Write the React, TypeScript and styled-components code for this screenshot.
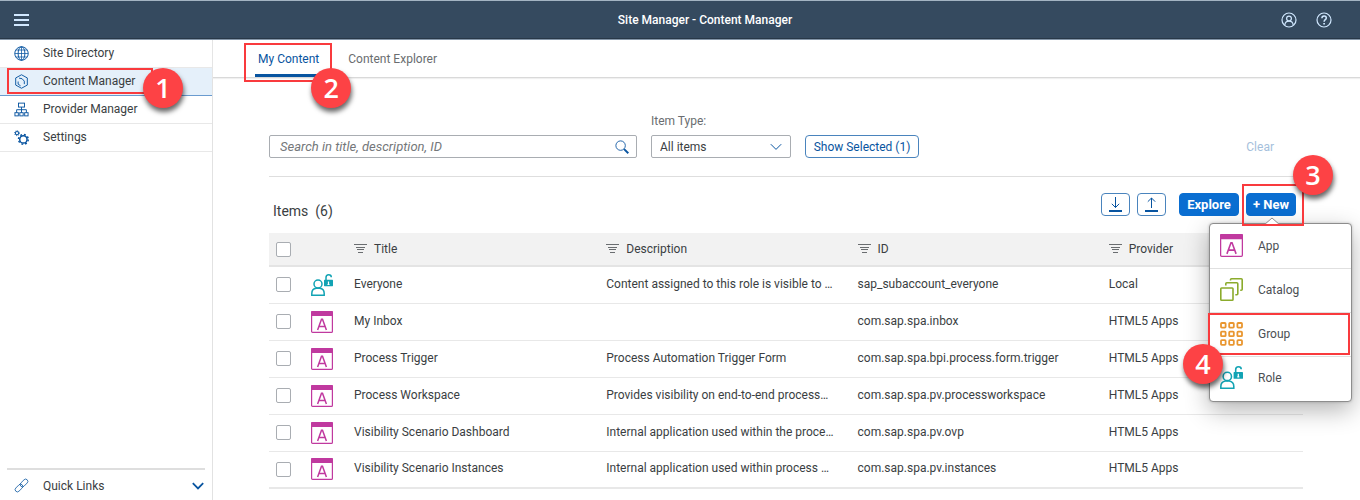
import React from "react";
import styled, { createGlobalStyle, css } from "styled-components";

const Global = createGlobalStyle`
  * { box-sizing: border-box; }
  body {
    margin: 0;
    background: #fff;
    color: #3a3e42;
    font: 12px/18px Roboto, "Liberation Sans", sans-serif;
  }
  button, input, select { font: inherit; color: inherit; }
  svg { display: block; flex: none; }
`;

const Page = styled.div`
  display: flex;
  flex-direction: column;
  min-height: 100vh;
`;

/* ---------- shell bar ---------- */

const ShellBar = styled.header`
  display: grid;
  grid-template-columns: 50px 1fr auto;
  align-items: center;
  height: 40px;
  background: #354a5f;
  border-top: 1px solid #a3b4c2;
  border-bottom: 1px solid #8496a8;
  box-shadow: inset 0 -1px 0 #283848;
  color: #fff;
`;

const ShellTitle = styled.h1`
  grid-column: 2 / 4;
  grid-row: 1;
  margin: 0;
  text-align: center;
  font-size: 12px;
  font-weight: 500;
`;

const ShellActions = styled.div`
  grid-column: 3;
  grid-row: 1;
  display: flex;
  gap: 19px;
  padding-right: 28px;
`;

const IconButton = styled.button`
  display: flex;
  padding: 0;
  border: 0;
  background: none;
  color: #d1e8ff;
`;

const MenuButton = styled(IconButton)`
  padding-left: 14px;
`;

/* ---------- side navigation ---------- */

const Body = styled.div`
  display: flex;
  flex: 1;
`;

const Sidebar = styled.nav`
  display: flex;
  flex-direction: column;
  justify-content: space-between;
  flex: none;
  width: 213px;
  border-right: 1px solid #e2e2e2;
`;

const NavList = styled.ul`
  list-style: none;
  margin: 0;
  padding: 0;
`;

const NavItem = styled.li<{ $active?: boolean }>`
  position: relative;
  border-bottom: 1px solid ${(p) => (p.$active ? "#6a9bcf" : "#e8e8e8")};
  background: ${(p) => (p.$active ? "#e5f0fa" : "#fff")};
`;

const NavLink = styled.a`
  display: flex;
  align-items: center;
  gap: 14px;
  height: 27px;
  padding: 0 0 1px 14px;
  color: #3a3e42;
  text-decoration: none;
`;

const QuickLinks = styled.button`
  display: flex;
  align-items: center;
  gap: 14px;
  height: 33px;
  margin: 0 7px;
  padding: 0 1px 0 7px;
  border: 0;
  border-top: 2px solid #dedede;
  background: none;
  text-align: left;
  color: #3a3e42;
`;

const QuickLabel = styled.span`
  flex: 1;
`;

/* ---------- main area ---------- */

const Main = styled.main`
  flex: 1;
  min-width: 0;
`;

const Tabs = styled.div`
  display: flex;
  gap: 23px;
  height: 38px;
  padding-left: 42px;
  border-bottom: 1px solid #d9d9d9;
  box-shadow: 0 1px 1px #f0f0f0;
`;

const Tab = styled.button<{ $active?: boolean }>`
  position: relative;
  padding: 4px 3px 0;
  border: 0;
  border-bottom: 3px solid ${(p) => (p.$active ? "#0854a0" : "transparent")};
  background: none;
  color: ${(p) => (p.$active ? "#0854a0" : "#6a6d70")};
`;

const Content = styled.div`
  padding: 34px 57px 12px 56px;
`;

const Filters = styled.div`
  display: flex;
  align-items: flex-end;
  gap: 14px;
  padding-bottom: 18px;
  border-bottom: 1px solid #dedede;
`;

const SearchBox = styled.label`
  display: flex;
  align-items: center;
  flex: 0 1 368px;
  height: 23px;
  padding: 0 7px 0 10px;
  border: 1px solid #a9adb2;
  border-radius: 2px;
  color: #0854a0;
`;

const SearchInput = styled.input`
  flex: 1;
  min-width: 0;
  padding: 0;
  border: 0;
  outline: 0;
  background: none;
  font-size: 13px;
  color: #3a3e42;
  &::placeholder {
    color: #74777a;
    font-style: italic;
    opacity: 1;
  }
`;

const Field = styled.div`
  display: flex;
  flex-direction: column;
  gap: 5px;
  width: 140px;
  color: #6a6d70;
`;

const SelectBox = styled.div`
  display: grid;
  align-items: center;
  height: 23px;
  border: 1px solid #a9adb2;
  border-radius: 2px;
  color: #0854a0;
  > * { grid-area: 1 / 1; }
  > svg {
    justify-self: end;
    margin-right: 8px;
    pointer-events: none;
  }
`;

const Select = styled.select`
  appearance: none;
  width: 100%;
  height: 21px;
  padding: 0 8px;
  border: 0;
  outline: 0;
  background: none;
  color: #3a3e42;
`;

const Button = styled.button<{ $kind?: "solid" | "text"; $w?: number }>`
  display: flex;
  align-items: center;
  justify-content: center;
  height: 23px;
  width: ${(p) => (p.$w ? `${p.$w}px` : "auto")};
  padding: 0;
  border: 1px solid #4a84bd;
  border-radius: 4px;
  background: #fff;
  color: #0854a0;
  white-space: nowrap;
  ${(p) =>
    p.$kind === "solid" &&
    css`
      border-color: #0a6ed1;
      background: #0a6ed1;
      color: #fff;
      font-size: 13px;
      font-weight: 700;
    `}
  ${(p) =>
    p.$kind === "text" &&
    css`
      margin: 0 28px 0 auto;
      border-color: transparent;
      background: none;
      color: #a5bfdc;
    `}
`;

const Toolbar = styled.div`
  display: flex;
  align-items: flex-start;
  gap: 7px;
  height: 56px;
  padding: 16px 7px 0 4px;
`;

const ItemsTitle = styled.h2`
  flex: 1;
  margin: 8px 0 0;
  font-size: 14px;
  line-height: 20px;
  font-weight: 400;
  white-space: pre;
`;

const ExploreSlot = styled.div`
  padding-left: 6px;
`;

const NewSlot = styled.div`
  position: relative;
`;

/* ---------- table ---------- */

const Table = styled.table`
  width: 100%;
  table-layout: fixed;
  border-collapse: collapse;
`;

const HeadRow = styled.tr`
  height: 33px;
  background: #f2f2f2;
  border-bottom: 2px solid #e4e4e4;
`;

const Row = styled.tr`
  height: 37px;
  border-bottom: 1px solid #e8e8e8;
  &:last-child { border-bottom: 2px solid #e8e8e8; }
`;

const cell = css`
  padding: 0 12px 0 5px;
  text-align: left;
  font-weight: 400;
  overflow: hidden;
  text-overflow: ellipsis;
  white-space: nowrap;
`;

const HeadCell = styled.th`${cell}`;
const Cell = styled.td`${cell}`;

const TextCell = styled(Cell)`
  padding-bottom: 2px;
`;

const Col = styled.col<{ $w?: string }>`
  width: ${(p) => p.$w ?? "auto"};
`;

const HeadLabel = styled.span`
  display: flex;
  align-items: center;
  gap: 7px;
  > svg { margin-bottom: 2px; }
`;

const Checkbox = styled.input`
  appearance: none;
  display: block;
  width: 15px;
  height: 15px;
  margin: 0 0 0 2px;
  border: 1px solid #a9adb2;
  border-radius: 2px;
  background: #fff;
`;

/* ---------- popover menu ---------- */

const Popover = styled.div`
  position: absolute;
  z-index: 2;
  top: 30px;
  left: -37px;
  width: 143px;
  padding: 1px 0;
  border: 1px solid #8d8d8d;
  border-radius: 4px;
  background: #fff;
  box-shadow: 0 8px 24px rgba(0, 0, 0, 0.3), 0 0 3px rgba(0, 0, 0, 0.2);
`;

const Caret = styled.svg`
  position: absolute;
  top: -7px;
  left: 54px;
`;

const MenuItem = styled.div<{ $marked?: boolean }>`
  position: relative;
  box-shadow: ${(p) => (p.$marked ? "0 1px 0 #b9b9b9" : "none")};
  & + & { border-top: 1px solid #e0e0e0; }
`;

const MenuAction = styled.button`
  display: flex;
  align-items: center;
  gap: 15px;
  width: 100%;
  height: 43px;
  padding: 0 10px 2px;
  border: 0;
  background: none;
  color: #4c5054;
`;

/* ---------- numbered callouts ---------- */

const Frame = styled.span<{ $inset: string }>`
  position: absolute;
  z-index: 3;
  inset: ${(p) => p.$inset};
  border: 2px solid #f93a3d;
  pointer-events: none;
`;

const badgePlace = {
  side: "right: -32px; bottom: -16px;",
  corner: "right: -21px; bottom: -28px;",
  left: "left: -27px; top: 29px;",
  top: "right: -31px; top: -31px;",
};

const Badge = styled.span<{ $at: keyof typeof badgePlace }>`
  position: absolute;
  z-index: 4;
  ${(p) => badgePlace[p.$at]}
  width: 40px;
  height: 40px;
  border-radius: 50%;
  background: #fd4245;
  box-shadow: 1px 4px 5px rgba(0, 0, 0, 0.6);
  color: #fff;
  font: 600 27px/40px "Open Sans", "Noto Sans", sans-serif;
  text-align: center;
`;

/* ---------- icons ---------- */

const Line = ({ size = 15, w = 1, children }: { size?: number; w?: number; children: React.ReactNode }) => (
  <svg width={size} height={size} viewBox="0 0 16 16" fill="none" stroke="currentColor" strokeWidth={w} aria-hidden>
    {children}
  </svg>
);

const NavIcon = styled.span`
  display: flex;
  color: #0854a0;
`;

const GlobeIcon = () => (
  <Line>
    <circle cx="8" cy="8" r="7.2" />
    <ellipse cx="8" cy="8" rx="3.6" ry="7.2" />
    <path d="M8 .8v14.4M.8 8h14.4M2 4.3h12M2 11.7h12" strokeWidth=".8" />
  </Line>
);

const ContentIcon = () => (
  <Line>
    <path d="M8 .8l6.2 3.4v7.6L8 15.2l-6.2-3.4V4.2z" />
    <path d="M5.4 4.4 8.6 5l2.4 2.6v3.2M4.4 8v2.8L7 12.6" />
  </Line>
);

const HierarchyIcon = () => (
  <Line>
    <rect x="4.8" y="1.2" width="6.4" height="4.2" />
    <path d="M8 5.4v6M2.8 11.2V8.2h10.4v3" />
    <rect x="1" y="11.4" width="3.6" height="3.4" />
    <rect x="6.2" y="11.4" width="3.6" height="3.4" />
    <rect x="11.4" y="11.4" width="3.6" height="3.4" />
  </Line>
);

const GearsIcon = () => (
  <Line w={1.6}>
    <circle cx="10" cy="10" r="3.9" />
    <circle cx="10" cy="10" r="5.2" strokeDasharray="2 2.08" strokeWidth="1.6" />
    <circle cx="3.2" cy="3.4" r="1.7" strokeWidth="1.1" />
    <circle cx="3.2" cy="3.4" r="2.6" strokeDasharray="1 1.04" strokeWidth="1" />
  </Line>
);

const LinkIcon = () => (
  <Line w={0.8}>
    <g transform="rotate(-45 8 8)">
      <rect x="-.6" y="5.6" width="9.6" height="4.8" rx="2.4" />
      <rect x="7" y="5.6" width="9.6" height="4.8" rx="2.4" />
    </g>
  </Line>
);

const ChevronIcon = ({ w = 1 }: { w?: number }) => (
  <svg width="12" height="8" viewBox="0 0 12 8" fill="none" stroke="currentColor" strokeWidth={w} aria-hidden>
    <path d="M.8 1.2 6 6.4l5.2-5.2" />
  </svg>
);

const SearchIcon = () => (
  <Line size={14}>
    <circle cx="6.4" cy="6.4" r="5.4" />
    <path d="m10.4 10.4 4.8 4.8" strokeWidth="2.2" />
  </Line>
);

const BurgerIcon = () => (
  <svg width="15" height="12" viewBox="0 0 15 12" fill="currentColor" aria-hidden>
    <path d="M0 0h15v2H0zM0 5h15v2H0zM0 10h15v2H0z" />
  </svg>
);

const UserIcon = () => (
  <Line size={16} w={1.2}>
    <circle cx="8" cy="8" r="7" />
    <circle cx="8" cy="6.6" r="2.4" />
    <path d="M3.8 13c.3-2.4 1.9-3.8 4.2-3.8s3.9 1.4 4.2 3.8" />
  </Line>
);

const HelpIcon = () => (
  <Line size={16} w={1.2}>
    <circle cx="8" cy="8" r="7" />
    <path d="M5.9 6.3c0-1.5.9-2.3 2.2-2.3s2.2.8 2.2 2c0 1.7-2.2 1.7-2.2 3.7" strokeWidth="1.5" />
    <path d="M8.1 11v1.6" strokeWidth="1.7" />
  </Line>
);

const FilterIcon = () => (
  <svg width="13" height="9" viewBox="0 0 13 9" stroke="#6a6d70" strokeWidth="1" aria-hidden>
    <path d="M0 .5h13M2 3.5h9M3 5.5h7M4 8.5h5" />
  </svg>
);

const TransferIcon = ({ up }: { up?: boolean }) => (
  <svg width="15" height="15" viewBox="0 0 15 15" fill="none" stroke="currentColor" aria-hidden>
    <path d={up ? "M7.5 11V1M3.8 4.7 7.5 1l3.7 3.7" : "M7.5 0v10.5M3.8 6.8l3.7 3.7 3.7-3.7"} />
    <path d="M1 14h13" strokeWidth="2" />
  </svg>
);

const AppIcon = ({ size = 22 }: { size?: number }) => (
  <svg width={size} height={size} viewBox="0 0 22 22" aria-hidden>
    <rect x=".6" y=".6" width="20.8" height="20.8" rx="1" fill="#fff" stroke="#c0399f" strokeWidth="1.2" />
    <path d="M0 1a1 1 0 0 1 1-1h20a1 1 0 0 1 1 1v4H0z" fill="#c0399f" />
    <path d="M6.6 19 10.5 8.3h1L15.4 19M8 15.4h6" fill="none" stroke="#c0399f" strokeWidth="1.5" />
  </svg>
);

const RoleIcon = ({ size = 22 }: { size?: number }) => (
  <svg width={size} height={size} viewBox="0 0 22 22" fill="none" stroke="#12a3b4" strokeWidth="1.5" aria-hidden>
    <circle cx="7" cy="10" r="4" />
    <path d="M.8 21.2v-1.7c0-3 2-4.9 4.5-5.2h3.4c2.5.3 4.5 2.2 4.5 5.2v1.7z" />
    <path d="M15 6V3.6C15 1.8 16.1.8 17.7.8s2.6 1 2.6 2.4" />
    <rect x="13" y="5.8" width="9" height="6.4" rx=".6" fill="#12a3b4" stroke="none" />
    <path d="M17.5 7.5v3M16.5 10.5h2" stroke="#fff" strokeWidth="1.2" />
  </svg>
);

const CatalogIcon = () => (
  <svg width="23" height="23" viewBox="0 0 23 23" fill="none" stroke="#8bab2c" strokeWidth="1.6" aria-hidden>
    <rect x=".8" y="10" width="12.2" height="12.2" rx=".8" />
    <path d="M5.8 7.5V5.8a1 1 0 0 1 1-1h10a1 1 0 0 1 1 1v10a1 1 0 0 1-1 1h-1.5" />
    <path d="M10.5 2.6V1.8a1 1 0 0 1 1-1h9.7a1 1 0 0 1 1 1v9.4a1 1 0 0 1-1 1h-1" />
  </svg>
);

const GroupIcon = () => (
  <svg width="23" height="24" viewBox="0 0 23 24" fill="none" stroke="#e9962f" strokeWidth="1.8" aria-hidden>
    {[1, 9.6, 18.2].map((y) =>
      [1, 9.2, 17.4].map((x) => <rect key={`${x}-${y}`} x={x} y={y} width="4.6" height="4.6" rx=".8" />)
    )}
  </svg>
);

/* ---------- data ---------- */

const navItems = [
  { label: "Site Directory", icon: <GlobeIcon /> },
  { label: "Content Manager", icon: <ContentIcon />, active: true },
  { label: "Provider Manager", icon: <HierarchyIcon /> },
  { label: "Settings", icon: <GearsIcon /> },
];

const rows = [
  ["Everyone", "Content assigned to this role is visible to …", "sap_subaccount_everyone", "Local"],
  ["My Inbox", "", "com.sap.spa.inbox", "HTML5 Apps"],
  ["Process Trigger", "Process Automation Trigger Form", "com.sap.spa.bpi.process.form.trigger", "HTML5 Apps"],
  ["Process Workspace", "Provides visibility on end-to-end process…", "com.sap.spa.pv.processworkspace", "HTML5 Apps"],
  ["Visibility Scenario Dashboard", "Internal application used within the proce…", "com.sap.spa.pv.ovp", "HTML5 Apps"],
  ["Visibility Scenario Instances", "Internal application used within process …", "com.sap.spa.pv.instances", "HTML5 Apps"],
];

const menu = [
  { label: "App", icon: <AppIcon size={23} /> },
  { label: "Catalog", icon: <CatalogIcon /> },
  { label: "Group", icon: <GroupIcon />, marked: true },
  { label: "Role", icon: <RoleIcon size={23} /> },
];

export default function App() {
  return (
    <Page>
      <Global />
      <ShellBar>
        <MenuButton aria-label="Menu"><BurgerIcon /></MenuButton>
        <ShellTitle>Site Manager - Content Manager</ShellTitle>
        <ShellActions>
          <IconButton aria-label="Profile"><UserIcon /></IconButton>
          <IconButton aria-label="Help"><HelpIcon /></IconButton>
        </ShellActions>
      </ShellBar>
      <Body>
        <Sidebar>
          <NavList>
            {navItems.map((n) => (
              <NavItem key={n.label} $active={n.active}>
                <NavLink href="#">
                  <NavIcon>{n.icon}</NavIcon>
                  {n.label}
                </NavLink>
                {n.active && (
                  <Frame $inset="0 59px 1px 7px"><Badge $at="side">1</Badge></Frame>
                )}
              </NavItem>
            ))}
          </NavList>
          <QuickLinks>
            <NavIcon><LinkIcon /></NavIcon>
            <QuickLabel>Quick Links</QuickLabel>
            <NavIcon><ChevronIcon w={1.8} /></NavIcon>
          </QuickLinks>
        </Sidebar>
        <Main>
          <Tabs role="tablist">
            <Tab role="tab" aria-selected $active>
              My Content
              <Frame $inset="3px -10px -8px -11px"><Badge $at="corner">2</Badge></Frame>
            </Tab>
            <Tab role="tab" aria-selected={false}>Content Explorer</Tab>
          </Tabs>
          <Content>
            <Filters>
              <SearchBox>
                <SearchInput aria-label="Search" placeholder="Search in title, description, ID" />
                <SearchIcon />
              </SearchBox>
              <Field>
                <label htmlFor="item-type">Item Type:</label>
                <SelectBox>
                  <Select id="item-type">
                    <option>All items</option>
                  </Select>
                  <ChevronIcon />
                </SelectBox>
              </Field>
              <Button $w={114}>Show Selected (1)</Button>
              <Button $kind="text">Clear</Button>
            </Filters>
            <Toolbar>
              <ItemsTitle>{"Items  (6)"}</ItemsTitle>
              <Button $w={29} aria-label="Import"><TransferIcon /></Button>
              <Button $w={29} aria-label="Export"><TransferIcon up /></Button>
              <ExploreSlot>
                <Button $kind="solid" $w={60}>Explore</Button>
              </ExploreSlot>
              <NewSlot>
                <Button $kind="solid" $w={50}>+ New</Button>
                <Popover>
                  {menu.map((m) => (
                    <MenuItem key={m.label} $marked={m.marked}>
                      <MenuAction>
                        {m.icon}
                        {m.label}
                      </MenuAction>
                      {m.marked && (
                        <Frame $inset="0 1px 1px -2px"><Badge $at="left">4</Badge></Frame>
                      )}
                    </MenuItem>
                  ))}
                  <Caret width="16" height="8" viewBox="0 0 16 8" aria-hidden>
                    <path d="M0 8 8 1l8 7" fill="#fff" stroke="#8d8d8d" />
                  </Caret>
                </Popover>
                <Frame $inset="-9px -8px -10px -4px"><Badge $at="top">3</Badge></Frame>
              </NewSlot>
            </Toolbar>
            <Table>
              <colgroup>
                <Col $w="37px" />
                <Col $w="43px" />
                <Col $w="24.4%" />
                <Col $w="24.3%" />
                <Col $w="24.3%" />
                <Col />
              </colgroup>
              <thead>
                <HeadRow>
                  <HeadCell><Checkbox type="checkbox" aria-label="Select all" /></HeadCell>
                  <HeadCell />
                  {["Title", "Description", "ID", "Provider"].map((h) => (
                    <HeadCell key={h}>
                      <HeadLabel><FilterIcon />{h}</HeadLabel>
                    </HeadCell>
                  ))}
                </HeadRow>
              </thead>
              <tbody>
                {rows.map(([title, description, id, provider], i) => (
                  <Row key={id}>
                    <Cell><Checkbox type="checkbox" aria-label={title} /></Cell>
                    <Cell>{i === 0 ? <RoleIcon /> : <AppIcon />}</Cell>
                    <TextCell>{title}</TextCell>
                    <TextCell>{description}</TextCell>
                    <TextCell>{id}</TextCell>
                    <TextCell>{provider}</TextCell>
                  </Row>
                ))}
              </tbody>
            </Table>
          </Content>
        </Main>
      </Body>
    </Page>
  );
}
